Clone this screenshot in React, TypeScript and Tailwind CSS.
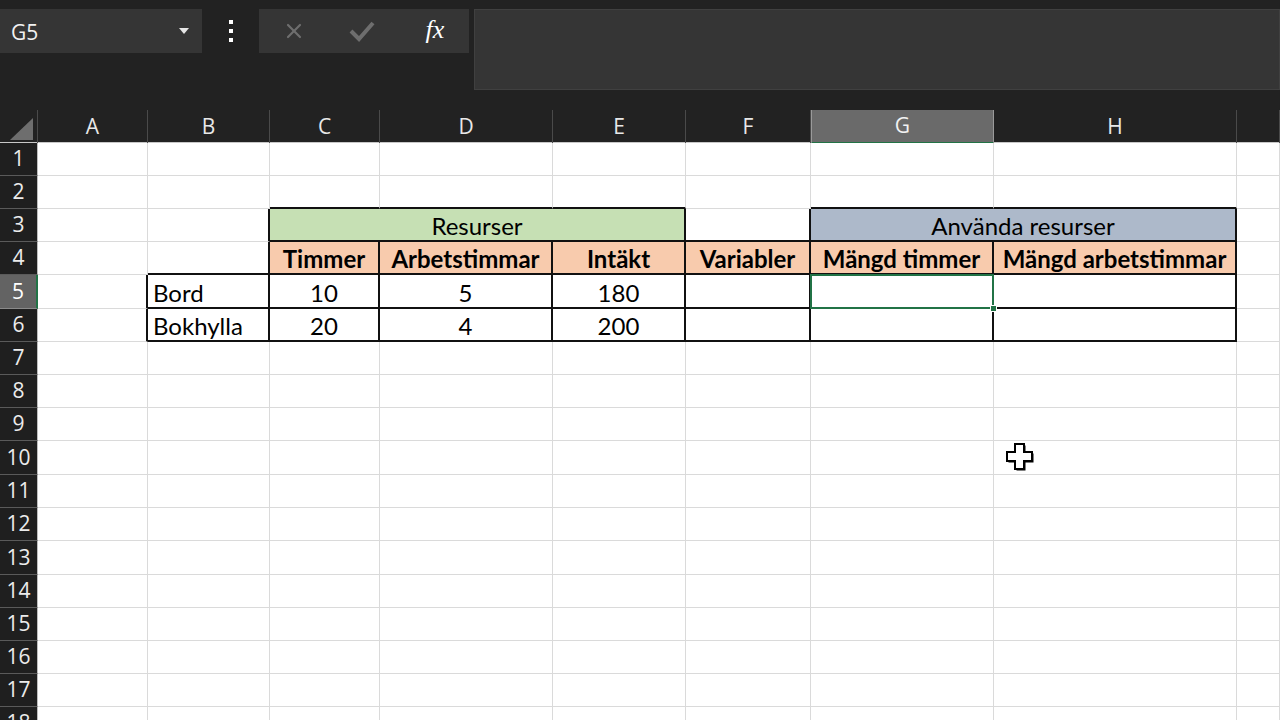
import { X } from "lucide-react";

type Cell = {
  col: number;
  span?: number;
  text?: string;
  bg?: string;
  bold?: boolean;
  left?: boolean;
};

const columns = ["A", "B", "C", "D", "E", "F", "G", "H", ""];
const rowNumbers = Array.from({ length: 18 }, (_, i) => i + 1);
const tallRows = [5, 10, 13];
const selectedRow = 5;
const selectedCol = 6;

const gridCols =
  "grid grid-cols-[38px_110px_122px_110px_173px_133px_125px_183px_243px_1fr]";

const spanClass: Record<number, string> = {
  1: "col-span-1",
  2: "col-span-2",
  3: "col-span-3",
};

// Cells that belong to the bordered resource table
const table: Record<number, Cell[]> = {
  3: [
    { col: 2, span: 3, text: "Resurser", bg: "bg-[#c6e0b4]" },
    { col: 6, span: 2, text: "Använda resurser", bg: "bg-[#adb9ca]" },
  ],
  4: [
    { col: 2, text: "Timmer", bg: "bg-[#f8cbad]", bold: true },
    { col: 3, text: "Arbetstimmar", bg: "bg-[#f8cbad]", bold: true },
    { col: 4, text: "Intäkt", bg: "bg-[#f8cbad]", bold: true },
    { col: 5, text: "Variabler", bg: "bg-[#f8cbad]", bold: true },
    { col: 6, text: "Mängd timmer", bg: "bg-[#f8cbad]", bold: true },
    { col: 7, text: "Mängd arbetstimmar", bg: "bg-[#f8cbad]", bold: true },
  ],
  5: [
    { col: 1, text: "Bord", left: true },
    { col: 2, text: "10" },
    { col: 3, text: "5" },
    { col: 4, text: "180" },
    { col: 5 },
    { col: 6 },
    { col: 7 },
  ],
  6: [
    { col: 1, text: "Bokhylla", left: true },
    { col: 2, text: "20" },
    { col: 3, text: "4" },
    { col: 4, text: "200" },
    { col: 5 },
    { col: 6 },
    { col: 7 },
  ],
};

const bordered = (r: number, c: number) =>
  (table[r] ?? []).some((cell) => c >= cell.col && c < cell.col + (cell.span ?? 1));

const rowCells = (r: number): Cell[] => {
  const out: Cell[] = [];
  let c = 0;
  while (c < columns.length) {
    const hit = (table[r] ?? []).find((cell) => cell.col === c);
    if (hit) {
      out.push({ ...hit, span: hit.span ?? 1 });
      c += hit.span ?? 1;
    } else {
      out.push({ col: c, span: 1 });
      c += 1;
    }
  }
  return out;
};

const NameBox = () => (
  <div className="w-[202px] h-[44px] bg-[#353535] flex items-center justify-between pl-[11px] pr-[13px]">
    <span className="text-[21px] text-[#f2f2f2] font-['Open_Sans',sans-serif] pt-[3px]">G5</span>
    <svg width="10" height="6" viewBox="0 0 10 6">
      <path d="M0 0 L10 0 L5 6 Z" fill="#e6e6e6" />
    </svg>
  </div>
);

const FormulaBar = () => (
  <div className="h-[110px] flex items-start pt-[9px]">
    <NameBox />
    <div className="w-[57px] h-[44px] flex flex-col items-center justify-center gap-[5px] pl-[1px]">
      <span className="size-[4px] bg-white" />
      <span className="size-[4px] bg-white" />
      <span className="size-[4px] bg-white" />
    </div>
    <div className="w-[210px] h-[44px] bg-[#353535] grid grid-cols-3 items-center">
      <div className="flex justify-center">
        <X size={24} strokeWidth={2.2} className="text-[#6e6e6e]" />
      </div>
      <div className="flex justify-center pr-[4px]">
        <svg width="26" height="22" viewBox="0 0 26 22">
          <path d="M2 11 L10 19 L24 3" fill="none" stroke="#6e6e6e" strokeWidth="4" />
        </svg>
      </div>
      <div className="flex justify-center pl-[2px]">
        <span className="text-[26px] italic text-white font-['Liberation_Serif',serif] leading-none pb-[2px]">
          fx
        </span>
      </div>
    </div>
    <div className="ml-[5px] flex-1 h-[81px] bg-[#353535] border border-[#404040]" />
  </div>
);

const ColumnHeader = () => (
  <div className={`${gridCols} h-[33px] border-b border-b-[#c8c8c8]`}>
    <div className="flex items-end justify-end pr-[4px] pb-[4px] border-r border-r-[#4a4a4a]">
      <svg width="23" height="22" viewBox="0 0 23 22">
        <path d="M23 0 L23 22 L0 22 Z" fill="#6e6e6e" />
      </svg>
    </div>
    {columns.map((name, c) => (
      <div
        key={c}
        className={
          c === selectedCol
            ? "flex items-center justify-center bg-[#6a6a6a] border-x border-x-[#9a9a9a] border-b-2 border-b-[#217346] text-[21px] text-[#f2f2f2] font-['Open_Sans',sans-serif]"
            : "flex items-center justify-center border-r border-r-[#4a4a4a] text-[21px] text-[#e8e8e8] font-['Open_Sans',sans-serif]"
        }
      >
        {name}
      </div>
    ))}
  </div>
);

const SheetRow = ({ r }: { r: number }) => {
  const height = tallRows.includes(r) ? "h-[34px]" : "h-[33px]";
  return (
    <div className={`${gridCols} ${height}`}>
      <div
        className={
          r === selectedRow
            ? "flex items-center justify-center bg-[#636363] border-r-2 border-r-[#217346] border-b border-b-[#8a8a8a] text-[21px] text-white font-['Open_Sans',sans-serif]"
            : "flex items-center justify-center bg-[#1f1f1f] border-r border-r-[#bdbdbd] border-b border-b-[#5a5a5a] text-[21px] text-[#ececec] font-['Open_Sans',sans-serif]"
        }
      >
        {r}
      </div>
      {rowCells(r).map((cell) => {
        const span = cell.span ?? 1;
        const last = cell.col + span - 1;
        const own = bordered(r, cell.col);
        const rightBlack = own || bordered(r, last + 1);
        let bottomBlack = false;
        for (let c = cell.col; c <= last; c++) {
          if (bordered(r, c) || bordered(r + 1, c)) bottomBlack = true;
        }
        const selected = r === selectedRow && cell.col === selectedCol;
        return (
          <div
            key={cell.col}
            className={[
              spanClass[span],
              "relative flex items-center leading-none text-[24px] text-black pt-[3px]",
              cell.left ? "justify-start pl-[5px]" : "justify-center",
              cell.bold ? "font-bold" : "",
              cell.bg ?? "bg-white",
              rightBlack ? "border-r-2 border-r-[#111]" : "border-r border-r-[#dadada]",
              bottomBlack ? "border-b-2 border-b-[#111]" : "border-b border-b-[#dadada]",
            ].join(" ")}
          >
            {cell.text}
            {selected && (
              <>
                <div className="absolute z-10 -left-[1px] -top-[1px] -right-[2px] -bottom-[2px] border-2 border-[#217346]" />
                <div className="absolute z-10 -right-[5px] -bottom-[5px] size-[7px] bg-[#217346] border border-white" />
              </>
            )}
          </div>
        );
      })}
    </div>
  );
};

const CrossCursor = () => (
  <svg
    className="absolute left-[1004px] top-[441px]"
    width="32"
    height="32"
    viewBox="0 0 32 32"
  >
    <path
      d="M11 3 H20 V11 H28 V20 H20 V28 H11 V20 H3 V11 H11 Z"
      fill="#000"
      transform="translate(1.5 1.5)"
    />
    <path
      d="M11 3 H20 V11 H28 V20 H20 V28 H11 V20 H3 V11 H11 Z"
      fill="#fff"
      stroke="#000"
      strokeWidth="2"
    />
  </svg>
);

export default function App() {
  return (
    <div className="relative w-[1280px] h-[720px] overflow-hidden bg-[#222222] font-['Lato',sans-serif]">
      <FormulaBar />
      <ColumnHeader />
      {rowNumbers.map((r) => (
        <SheetRow key={r} r={r} />
      ))}
      <CrossCursor />
    </div>
  );
}
